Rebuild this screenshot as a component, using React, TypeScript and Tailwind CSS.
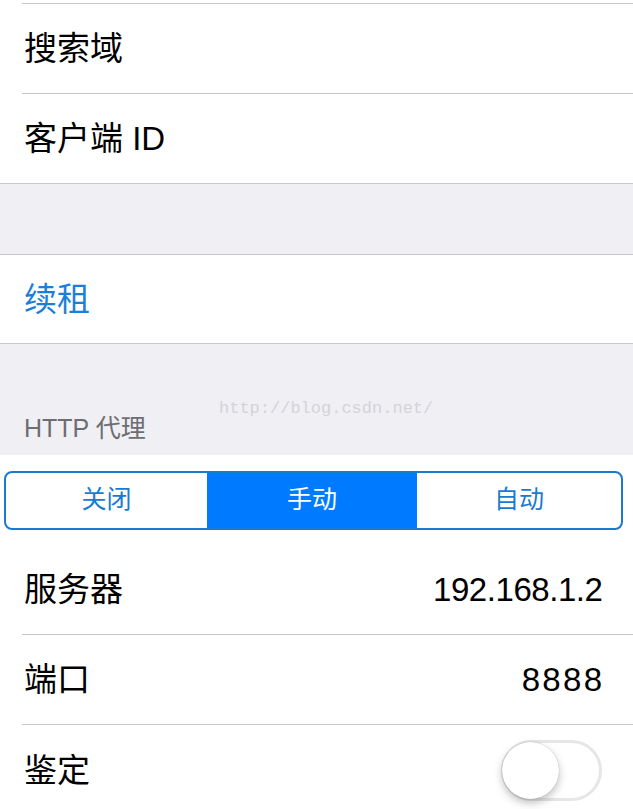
import React from "react";

const font = { fontFamily: '"Liberation Sans", "Noto Sans CJK SC", sans-serif' };

function Row({ label, value, valueClass = "", inset = true, children }: { label: string; value?: string; valueClass?: string; inset?: boolean; children?: React.ReactNode }) {
  return (
    <div className="pl-[22px] bg-white">
      <div className={`h-[90px] flex items-center justify-between pl-[2px] pr-[31px] ${inset ? "border-b border-[#c8c7cc]" : ""}`}>
        <span className="text-[33px] text-black leading-none">{label}</span>
        {value && <span className={`text-[33px] text-black leading-none ${valueClass}`}>{value}</span>}
        {children}
      </div>
    </div>
  );
}

export default function App() {
  return (
    <div className="w-[633px] h-[809px] overflow-hidden bg-[#efeff4]" style={font}>
      <div className="bg-white border-b border-[#c8c7cc]">
        <div className="pl-[22px]">
          <div className="h-[4px] border-b border-[#c8c7cc]" />
        </div>
        <Row label="搜索域" />
        <div className="h-[89px] flex items-center pl-[24px]">
          <span className="text-[33px] text-black leading-none">客户端 ID</span>
        </div>
      </div>
      <div className="h-[70px]" />
      <div className="bg-white border-y border-[#c8c7cc] h-[90px] flex items-center pl-[24px]">
        <span className="text-[33px] text-[#1b7fd8] leading-none">续租</span>
      </div>
      <div className="h-[111px] relative flex items-end pl-[24px] pb-[14px]">
        <span className="text-[25px] text-[#6d6d72] leading-none">HTTP 代理</span>
        <span
          className="absolute left-[219px] top-[56px] text-[17px] leading-none text-[#d4d4d8]"
          style={{ fontFamily: '"Liberation Mono", monospace' }}
        >
          http://blog.csdn.net/
        </span>
      </div>
      <div className="bg-white">
        <div className="h-[90px] flex items-center">
          <div className="ml-[4px] w-[619px] h-[59px] border-2 border-[#1a7ad0] rounded-[8px] overflow-hidden grid grid-cols-[201px_210px_1fr]">
            <div className="flex items-center justify-center text-[25px] text-[#1a7ad0]">关闭</div>
            <div className="flex items-center justify-center text-[25px] text-white bg-[#007aff]">手动</div>
            <div className="flex items-center justify-center text-[25px] text-[#1a7ad0]">自动</div>
          </div>
        </div>
        <Row label="服务器" value="192.168.1.2" valueClass="tracking-[-0.45px] -mr-[0.45px]" />
        <Row label="端口" value="8888" valueClass="tracking-[2.3px] -mr-[2.3px]" />
        <Row label="鉴定" inset={false}>
          <div className="w-[101px] h-[61px] rounded-full border-[3px] border-[#e6e6e6] bg-white relative">
            <div className="absolute left-[-2px] top-[-1px] w-[57px] h-[57px] rounded-full bg-white shadow-[0_4px_8px_rgba(0,0,0,0.25),0_0_1px_rgba(0,0,0,0.3)]" />
          </div>
        </Row>
      </div>
    </div>
  );
}
